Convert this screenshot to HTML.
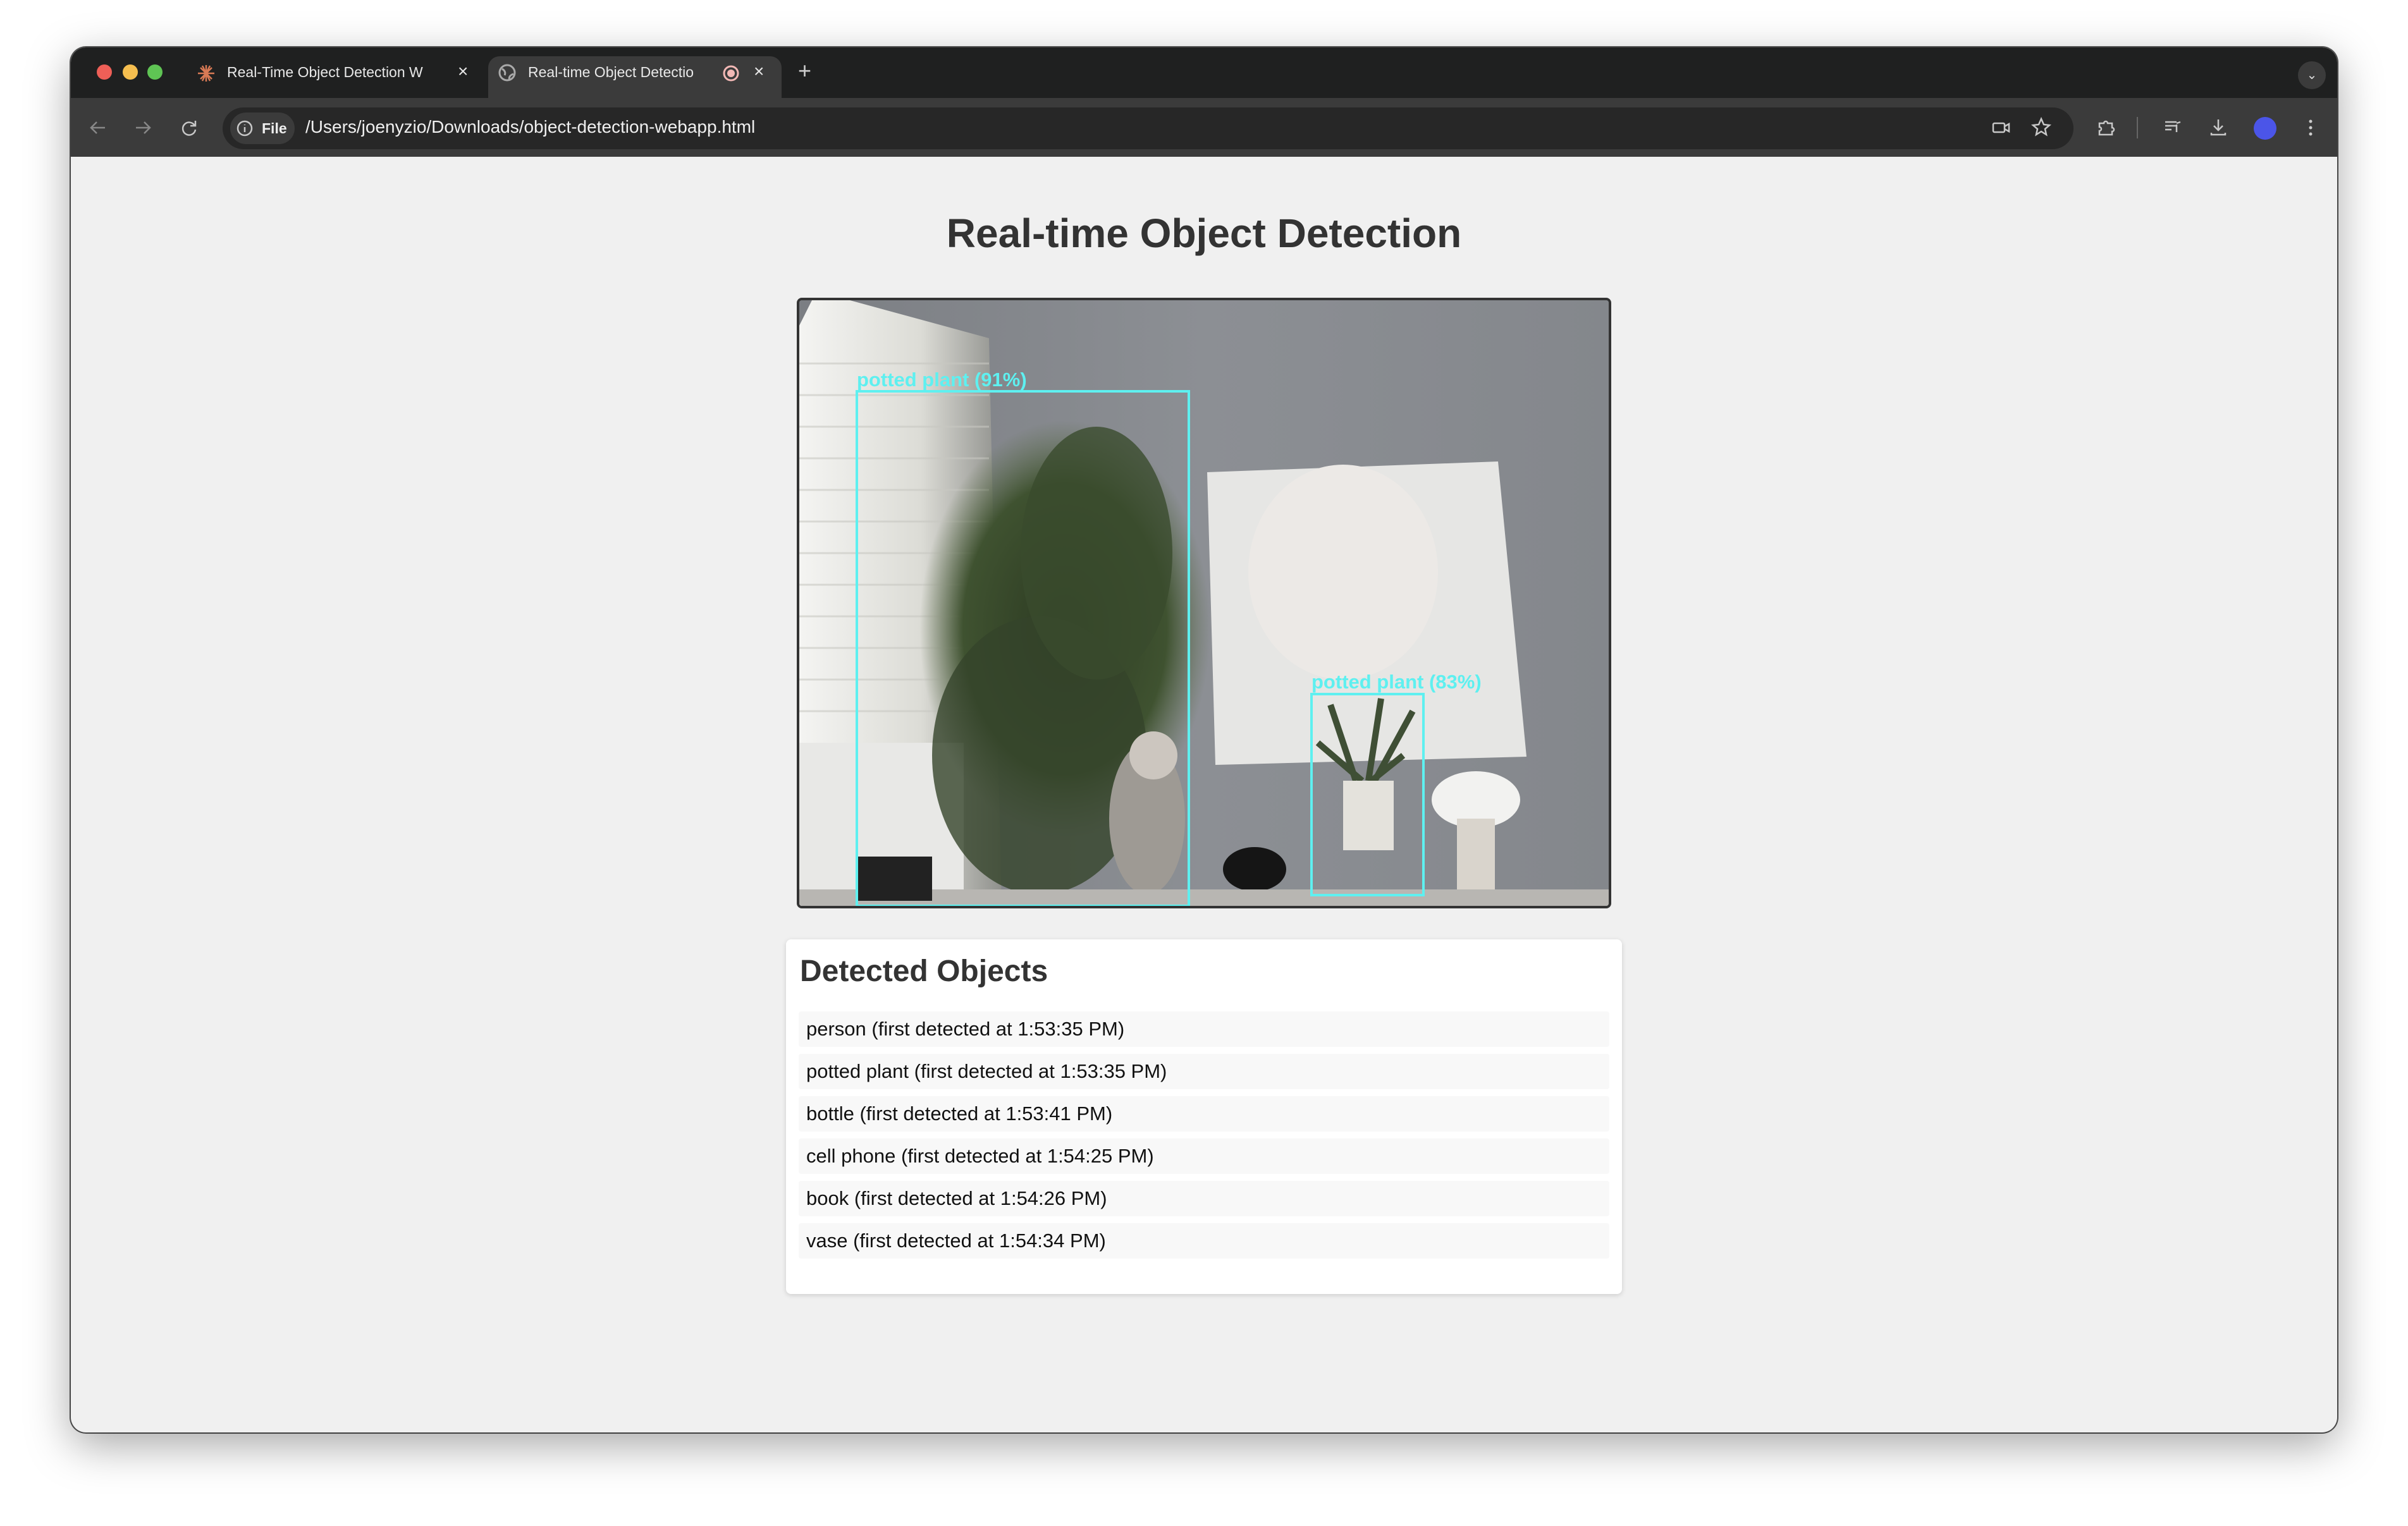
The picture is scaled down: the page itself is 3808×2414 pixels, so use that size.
<!DOCTYPE html>
<html><head><meta charset="utf-8"><style>
*{margin:0;padding:0;box-sizing:border-box}
body{width:3808px;height:2414px;background:#fff;position:relative;overflow:hidden;font-family:"Liberation Sans",Arial,sans-serif}
.win{position:absolute;left:112px;top:75px;width:3584px;height:2191px;border-radius:24px;overflow:hidden;background:#f0f0f0;box-shadow:0 20px 70px rgba(0,0,0,.35),0 0 0 2px #555}
.tabbar{position:absolute;left:0;top:0;width:100%;height:80px;background:#1f2020}
.toolbar{position:absolute;left:0;top:80px;width:100%;height:93px;background:#3b3b3b}
.dot{position:absolute;top:27px;width:24px;height:24px;border-radius:50%}
.tab{position:absolute;color:#e8e8e8;font-size:23px;top:26px;white-space:nowrap}
.atab{position:absolute;left:660px;top:14px;width:464px;height:70px;background:#3b3b3b;border-radius:18px 18px 0 0}
.omni{position:absolute;left:240px;top:95px;width:2927px;height:66px;background:#272727;border-radius:33px}
.chip{position:absolute;left:252px;top:103px;width:102px;height:50px;background:#3b3b3b;border-radius:25px;color:#eee;font-size:23px;font-weight:bold;line-height:50px;padding-left:50px}
.url{position:absolute;left:371px;top:110px;color:#f0f0f0;font-size:28px}
.ic{position:absolute;stroke:#c8c8c8;fill:none;stroke-width:2.5}
h1{position:absolute;left:0;width:100%;text-align:center;top:257px;font-size:64px;color:#333;font-weight:bold}
.video{position:absolute;left:1148px;top:396px;width:1288px;height:966px;border:4px solid #333;border-radius:8px;overflow:hidden;background:#888b90}
.panel{position:absolute;left:1131px;top:1411px;width:1322px;height:561px;background:#fff;border-radius:8px;box-shadow:0 2px 8px rgba(0,0,0,.15)}
.panel h2{position:absolute;left:22px;top:23px;font-size:48px;color:#333;font-weight:bold}
.row{position:absolute;left:20px;width:1282px;height:56px;background:#f8f8f8;border-radius:4px;font-size:31px;color:#111;line-height:56px;padding-left:12px}
</style></head><body>
<div class="win">
<div class="tabbar"></div>
<div class="atab"></div>
<div class="dot" style="left:41px;background:#ee5f57"></div>
<div class="dot" style="left:82px;background:#f5be4f"></div>
<div class="dot" style="left:121px;background:#5fc454"></div>
<svg class="ic" style="left:199px;top:26px;stroke:#d97a55" width="30" height="30" viewBox="0 0 30 30"><path d="M15 2v26M2 15h26M6 6l18 18M24 6L6 24M9 3l12 24M21 3L9 27"/></svg>
<div class="tab" style="left:247px">Real-Time Object Detection W</div>
<div class="tab" style="left:612px;font-size:28px;top:22px">×</div>
<svg class="ic" style="left:676px;top:26px;stroke:#aaa" width="28" height="28" viewBox="0 0 28 28"><circle cx="14" cy="14" r="12" stroke-width="3"/><path d="M6 8c4 2 6 6 4 10M18 26c-2-4 0-8 6-10" stroke-width="3"/></svg>
<div class="tab" style="left:723px">Real-time Object Detectio</div>
<svg style="position:absolute;left:1030px;top:27px" width="28" height="28"><circle cx="14" cy="14" r="11" fill="none" stroke="#f2b8b5" stroke-width="3"/><circle cx="14" cy="14" r="6" fill="#f2b8b5"/></svg>
<div class="tab" style="left:1080px;font-size:28px;top:22px">×</div>
<div class="tab" style="left:1150px;font-size:36px;top:16px;color:#ccc">+</div>
<div style="position:absolute;left:3522px;top:22px;width:44px;height:44px;border-radius:50%;background:#3b3b3b;color:#ddd;text-align:center;font-size:20px;line-height:44px">⌄</div>
<div class="toolbar"></div>
<svg class="ic" style="left:28px;top:112px;stroke:#888" width="30" height="30" viewBox="0 0 30 30"><path d="M26 15H5M13 6l-9 9 9 9"/></svg>
<svg class="ic" style="left:99px;top:112px;stroke:#888" width="30" height="30" viewBox="0 0 30 30"><path d="M4 15h21M17 6l9 9-9 9"/></svg>
<svg class="ic" style="left:172px;top:112px" width="30" height="30" viewBox="0 0 30 30"><path d="M24 12a10 10 0 1 0 1 6M25 4v8h-8"/></svg>
<div class="omni"></div>
<div class="chip">File</div>
<svg class="ic" style="left:260px;top:113px" width="30" height="30" viewBox="0 0 30 30"><circle cx="15" cy="15" r="11"/><path d="M15 13v8M15 9v1"/></svg>
<div class="url">/Users/joenyzio/Downloads/object-detection-webapp.html</div>
<svg class="ic" style="left:3036px;top:112px" width="34" height="30" viewBox="0 0 34 30"><rect x="4" y="8" width="18" height="14" rx="2"/><path d="M22 13l7-4v12l-7-4"/></svg>
<svg class="ic" style="left:3100px;top:110px" width="32" height="32" viewBox="0 0 32 32"><path d="M16 3l4 9 9 1-7 6 2 9-8-5-8 5 2-9-7-6 9-1z"/></svg>
<svg class="ic" style="left:3203px;top:110px" width="32" height="32" viewBox="0 0 32 32"><path d="M5 10h7a3 3 0 0 1 6 0h7v7a3 3 0 0 1 0 6v5H5v-6a3 3 0 0 0 0-6z"/></svg>
<div style="position:absolute;left:3267px;top:110px;width:2px;height:34px;background:#666"></div>
<svg class="ic" style="left:3308px;top:110px" width="32" height="32" viewBox="0 0 32 32"><path d="M4 8h18M4 14h18M4 20h10M22 12v12M22 10l6-2"/></svg>
<svg class="ic" style="left:3380px;top:110px" width="32" height="32" viewBox="0 0 32 32"><path d="M16 4v17M9 14l7 7 7-7M5 25v3h22v-3"/></svg>
<div style="position:absolute;left:3452px;top:110px;width:36px;height:36px;border-radius:50%;background:#4b55e8"></div>
<svg style="position:absolute;left:3532px;top:110px" width="20" height="34"><circle cx="10" cy="7" r="2.5" fill="#ccc"/><circle cx="10" cy="17" r="2.5" fill="#ccc"/><circle cx="10" cy="27" r="2.5" fill="#ccc"/></svg>

<h1>Real-time Object Detection</h1>
<div class="video">
<svg width="1280" height="958" viewBox="0 0 1280 958" style="position:absolute;left:0;top:0">
<defs>
<linearGradient id="wall" x1="0" x2="1" y1="0" y2="0"><stop offset="0" stop-color="#7b7e83"/><stop offset=".5" stop-color="#8c8f94"/><stop offset="1" stop-color="#84878c"/></linearGradient>
<linearGradient id="blind" x1="0" x2="1"><stop offset="0" stop-color="#f4f4f2"/><stop offset=".6" stop-color="#dcdcd6"/><stop offset="1" stop-color="#8f908c"/></linearGradient>
<radialGradient id="leaf" cx=".5" cy=".5" r=".5"><stop offset="0" stop-color="#2c3a22"/><stop offset=".7" stop-color="#3f5230"/><stop offset="1" stop-color="#5a6c48" stop-opacity="0"/></radialGradient>
</defs>
<rect width="1280" height="958" fill="url(#wall)"/>
<polygon points="20,0 80,0 300,60 320,958 0,958 0,40" fill="url(#blind)"/>
<g stroke="#c8c8c2" stroke-width="3" opacity=".6"><path d="M0 100h300M0 150h300M0 200h300M0 250h300M0 300h300M0 350h300M0 400h300M0 450h300M0 500h300M0 550h300M0 600h300M0 650h300"/></g>
<rect x="0" y="700" width="260" height="258" fill="#e8e8e6"/>
<polygon points="645,272 1105,255 1150,722 658,735" fill="#e6e6e4"/>
<ellipse cx="860" cy="430" rx="150" ry="170" fill="#ece9e6"/>
<ellipse cx="420" cy="520" rx="230" ry="330" fill="url(#leaf)"/>
<ellipse cx="380" cy="720" rx="170" ry="220" fill="#34432a" opacity=".8"/>
<ellipse cx="470" cy="400" rx="120" ry="200" fill="#3a4b2d" opacity=".8"/>
<ellipse cx="550" cy="820" rx="60" ry="120" fill="#9e9a94"/>
<circle cx="560" cy="720" r="38" fill="#ccc6bf"/>
<path d="M880 760l-40-120M900 760l20-130M910 760l60-110M890 760l-70-60M905 760l50-40" stroke="#3f4f35" stroke-width="10"/>
<rect x="860" y="760" width="80" height="110" fill="#e4e2dc"/>
<ellipse cx="1070" cy="790" rx="70" ry="45" fill="#f2f2f0"/>
<rect x="1040" y="820" width="60" height="120" fill="#d9d4cc"/>
<ellipse cx="720" cy="900" rx="50" ry="35" fill="#151515"/>
<rect x="0" y="932" width="1280" height="26" fill="#b8b6b2"/>
<rect x="90" y="880" width="120" height="70" fill="#222"/>
<g fill="none" stroke="#5ef0f0" stroke-width="4"><rect x="91" y="144" width="525" height="814"/><rect x="810" y="623" width="177" height="318"/></g>
<g fill="#5ef0f0" font-family="Liberation Sans, sans-serif" font-size="31" font-weight="bold"><text x="91" y="136">potted plant (91%)</text><text x="810" y="614">potted plant (83%)</text></g>
</svg>
</div>
<div class="panel">
<h2>Detected Objects</h2>
<div class="row" style="top:114px">person (first detected at 1:53:35 PM)</div>
<div class="row" style="top:181px">potted plant (first detected at 1:53:35 PM)</div>
<div class="row" style="top:248px">bottle (first detected at 1:53:41 PM)</div>
<div class="row" style="top:315px">cell phone (first detected at 1:54:25 PM)</div>
<div class="row" style="top:382px">book (first detected at 1:54:26 PM)</div>
<div class="row" style="top:449px">vase (first detected at 1:54:34 PM)</div>
</div>
</div>
</body></html>
